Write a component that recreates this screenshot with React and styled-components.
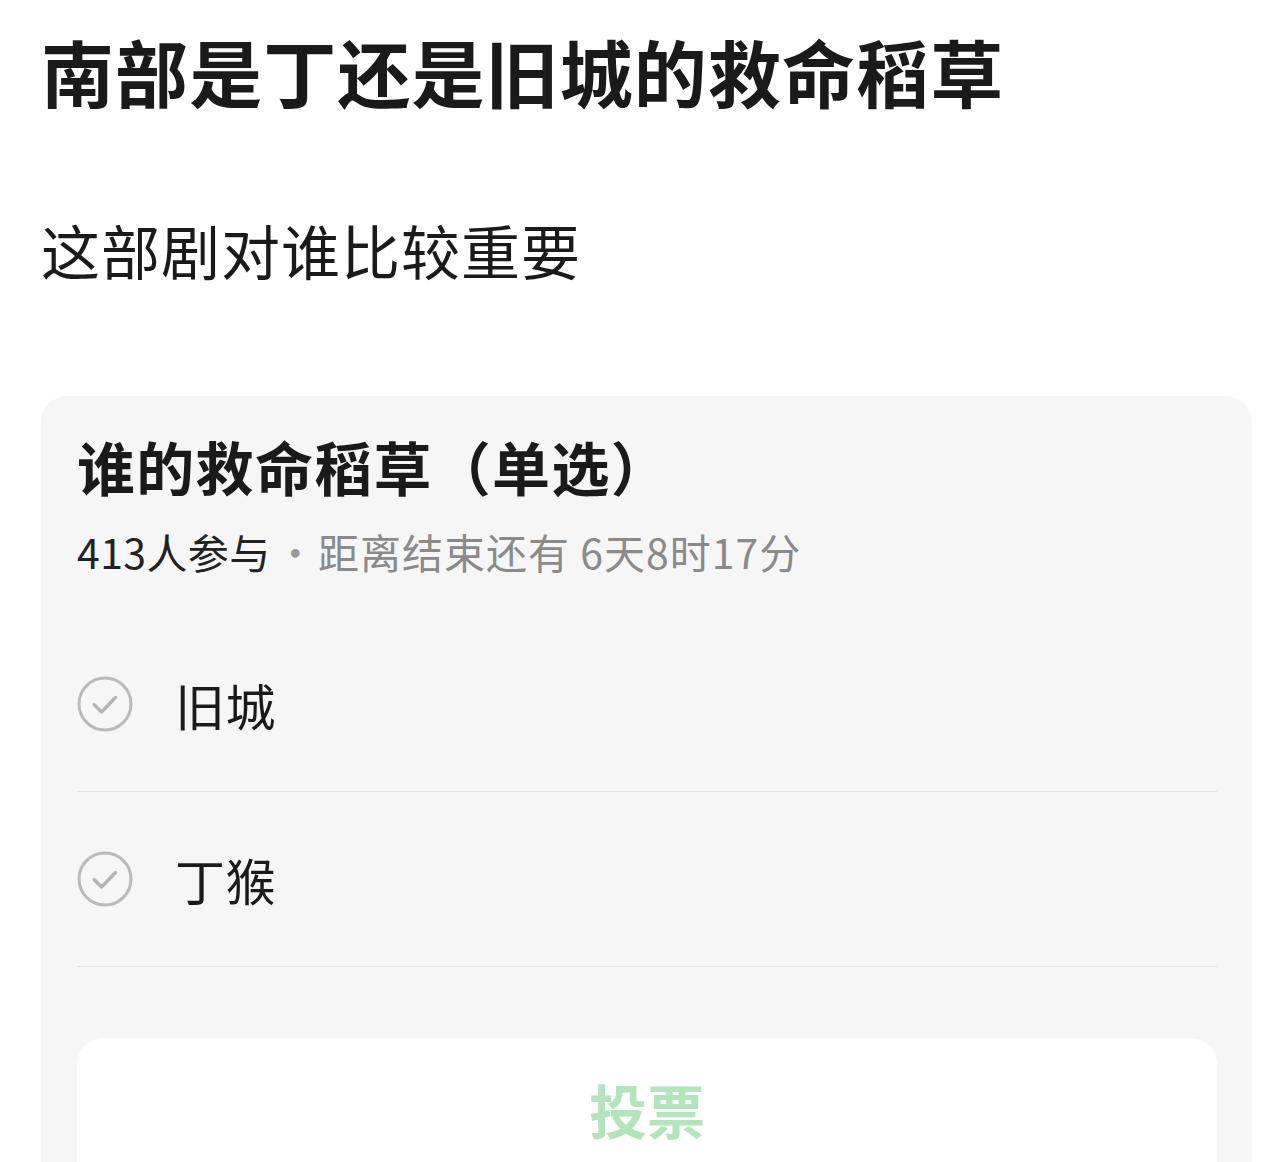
import React from "react";
import styled, { createGlobalStyle } from "styled-components";

const Global = createGlobalStyle`
  html, body { margin: 0; padding: 0; background: #ffffff; }
  body { font-family: "Noto Sans CJK SC", "Noto Sans", sans-serif; overflow: hidden; }
`;

const Page = styled.div`
  display: flex;
  flex-direction: column;
  padding: 27px 20px 0 41px;
  height: 1162px;
  box-sizing: border-box;
  overflow: hidden;
`;

const Title = styled.h1`
  margin: 0;
  font-size: 73px;
  line-height: 1.2;
  font-weight: 700;
  color: #1a1a1a;
  letter-spacing: 1.1px;
`;

const Lead = styled.p`
  margin: 100px 0 0;
  font-size: 59px;
  line-height: 1.2;
  font-weight: 400;
  color: #1a1a1a;
  letter-spacing: 1px;
`;

const Card = styled.section`
  margin-top: 111px;
  background: #f6f6f6;
  border-radius: 26px 26px 0 0;
  padding: 37px 35px 0 36px;
  flex: 1;
  display: flex;
  flex-direction: column;
`;

const CardTitle = styled.h2`
  margin: 0;
  font-size: 58px;
  line-height: 1.15;
  font-weight: 700;
  color: #1a1a1a;
  letter-spacing: 1.3px;
`;

const Meta = styled.div`
  margin-top: 27px;
  font-size: 41px;
  line-height: 1.2;
  color: #8a8a8a;
  display: flex;
  align-items: center;
  letter-spacing: 0.4px;
`;

const Count = styled.span`
  color: #222;
`;

const Dot = styled.span`
  margin: 0 2px 0 4px;
  color: #999;
`;

const Remaining = styled.span`
  letter-spacing: 1px;
`;

const Options = styled.div`
  margin-top: 41px;
  display: flex;
  flex-direction: column;
`;

const Option = styled.div`
  height: 174px;
  display: flex;
  align-items: center;
  gap: 42px;
  border-bottom: 1.5px solid #e2e2e2;
`;

const OptionLabel = styled.span`
  font-size: 50px;
  color: #1a1a1a;
  line-height: 1;
  letter-spacing: 0.5px;
`;

const VoteButton = styled.button`
  margin-top: 71px;
  height: 150px;
  border: none;
  border-radius: 26px 26px 0 0;
  background: #ffffff;
  color: #b3e4bc;
  font-family: inherit;
  font-size: 58px;
  font-weight: 700;
  display: flex;
  align-items: center;
  justify-content: center;
  padding: 0 0 8px;
`;

const CheckCircle = () => (
  <svg width="56" height="56" viewBox="0 0 56 56" fill="none">
    <circle cx="28" cy="28" r="26" stroke="#bababa" strokeWidth="3" />
    <path d="M17 28.5 L24.5 36 L38.5 21.5" stroke="#b5b5b5" strokeWidth="3.4" strokeLinecap="round" strokeLinejoin="round" />
  </svg>
);

export default function App() {
  const options = ["旧城", "丁猴"];
  return (
    <>
      <Global />
      <Page>
        <Title>南部是丁还是旧城的救命稻草</Title>
        <Lead>这部剧对谁比较重要</Lead>
        <Card>
          <CardTitle>谁的救命稻草（单选）</CardTitle>
          <Meta>
            <Count>413人参与</Count>
            <Dot>·</Dot>
            <Remaining>距离结束还有 6天8时17分</Remaining>
          </Meta>
          <Options>
            {options.map((o) => (
              <Option key={o}>
                <CheckCircle />
                <OptionLabel>{o}</OptionLabel>
              </Option>
            ))}
          </Options>
          <VoteButton>投票</VoteButton>
        </Card>
      </Page>
    </>
  );
}
